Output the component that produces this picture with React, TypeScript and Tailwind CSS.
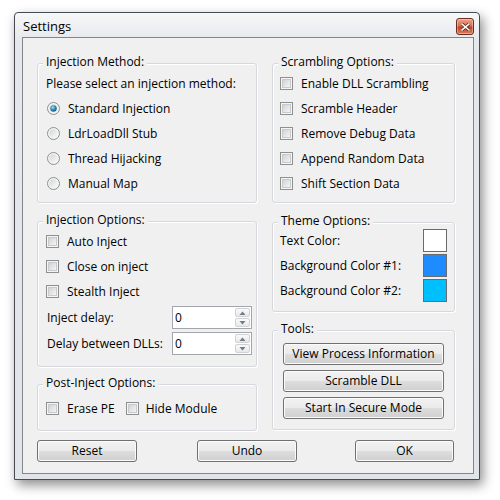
import React from "react";

const Radio = ({ checked }: { checked?: boolean }) => (
  <svg width="13" height="13" viewBox="0 0 13 13" className="shrink-0">
    <defs>
      <linearGradient id="rg" x1="0" y1="0" x2="1" y2="1">
        <stop offset="0" stopColor="#d2d4d6" />
        <stop offset="1" stopColor="#fbfbfb" />
      </linearGradient>
      <radialGradient id="rd" cx="0.4" cy="0.35" r="0.7">
        <stop offset="0" stopColor="#a9e3f5" />
        <stop offset="0.5" stopColor="#2f8fbd" />
        <stop offset="1" stopColor="#1a4f73" />
      </radialGradient>
    </defs>
    <circle cx="6.5" cy="6.5" r="6" fill="#f4f4f4" stroke="#8d8f90" />
    <circle cx="6.5" cy="6.5" r="4.2" fill="url(#rg)" />
    {checked ? <circle cx="6.5" cy="6.5" r="3.2" fill="url(#rd)" /> : null}
  </svg>
);

const Check = () => (
  <svg width="13" height="13" viewBox="0 0 13 13" className="shrink-0">
    <defs>
      <linearGradient id="cg" x1="0" y1="0" x2="1" y2="1">
        <stop offset="0" stopColor="#cdd0d3" />
        <stop offset="1" stopColor="#f7f7f7" />
      </linearGradient>
    </defs>
    <rect x="0.5" y="0.5" width="12" height="12" fill="#f5f5f5" stroke="#8e8f8f" />
    <rect x="2.5" y="2.5" width="8" height="8" fill="url(#cg)" stroke="#c8cacc" />
  </svg>
);

const Group = ({
  title,
  className,
  children,
}: {
  title: string;
  className: string;
  children?: React.ReactNode;
}) => (
  <div
    className={
      "relative rounded-[3px] border border-[#d5d9dd] shadow-[inset_1px_1px_0_#fff,1px_1px_0_#fff] " +
      className
    }
  >
    <span className="absolute left-[5px] top-[-10px] bg-[#f0f0f0] px-[3px] leading-[16px]">
      {title}
    </span>
    {children}
  </div>
);

const WinButton = ({ label, className }: { label: string; className: string }) => (
  <button
    className={
      "flex items-center justify-center rounded-[3px] border border-[#707070] bg-[linear-gradient(to_bottom,#f2f2f2_0%,#ebebeb_48%,#dddddd_52%,#cfcfcf_100%)] shadow-[inset_0_0_0_1px_#fbfbfb] leading-none " +
      className
    }
  >
    {label}
  </button>
);

const Spin = () => (
  <div className="flex h-[23px] w-[80px] items-stretch border border-[#a3a6ab] bg-white">
    <span className="flex-1 pl-[2px] leading-[21px]">0</span>
    <div className="flex w-[16px] flex-col gap-[1px] py-[1px] pr-[1px]">
      <div className="flex flex-1 items-center justify-center rounded-[2px] border border-[#cfd1d4] bg-[linear-gradient(to_bottom,#fafafa,#e8e8e8)]">
        <svg width="7" height="4" viewBox="0 0 7 4">
          <path d="M0.5 4 L3.5 0.5 L6.5 4 Z" fill="#6f7d8b" />
        </svg>
      </div>
      <div className="flex flex-1 items-center justify-center rounded-[2px] border border-[#cfd1d4] bg-[linear-gradient(to_bottom,#fafafa,#e8e8e8)]">
        <svg width="7" height="4" viewBox="0 0 7 4">
          <path d="M0.5 0 L3.5 3.5 L6.5 0 Z" fill="#6f7d8b" />
        </svg>
      </div>
    </div>
  </div>
);

const CheckRow = ({ label }: { label: string }) => (
  <div className="flex h-[25px] items-center gap-[8px]">
    <Check />
    <span>{label}</span>
  </div>
);

const RadioRow = ({ label, checked }: { label: string; checked?: boolean }) => (
  <div className="flex h-[25px] items-center gap-[8px] pl-[1px]">
    <Radio checked={checked} />
    <span>{label}</span>
  </div>
);

const ThemeRow = ({ label, color }: { label: string; color: string }) => (
  <div className="flex h-[25px] items-center justify-between">
    <span>{label}</span>
    <div className={"h-[23px] w-[24px] border border-[#6b6b6b] " + color} />
  </div>
);

export default function App() {
  return (
    <div
      className="h-[500px] w-[500px] bg-white pl-[14px] pt-[12px] text-[12px] text-black"
      style={{ fontFamily: '"Open Sans", "Noto Sans", sans-serif' }}
    >
      <div className="h-[468px] w-[466px] rounded-t-[4px] border border-[#474b50] bg-[linear-gradient(to_bottom,#f6f7f9_0px,#e4e7eb_30px,#e1e4e8_100%)] shadow-[3px_5px_12px_rgba(0,0,0,0.45)]">
        {/* title bar */}
        <div className="flex h-[24px] items-start justify-between">
          <span className="pl-[8px] pt-[4px] text-[13px] leading-[18px]">Settings</span>
          <div className="mr-[5px] mt-[5px] flex h-[17px] w-[18px] items-center justify-center rounded-[3px] border border-[#6e2a1c] bg-[linear-gradient(to_bottom,#e9a48c_0%,#d26f52_45%,#bb4325_55%,#d9805e_100%)] shadow-[inset_0_0_0_1px_rgba(255,255,255,0.35)]">
            <svg width="9" height="8" viewBox="0 0 9 8">
              <path d="M1 1 L8 7 M8 1 L1 7" stroke="#5a2014" strokeWidth="3" strokeLinecap="square" />
              <path d="M1 1 L8 7 M8 1 L1 7" stroke="#ffffff" strokeWidth="1.6" strokeLinecap="square" />
            </svg>
          </div>
        </div>

        {/* client area */}
        <div className="ml-[7px] h-[437px] w-[452px] border border-[#82868a] bg-[#f0f0f0] pl-[14px] pt-[25px]">
          <div className="flex gap-[15px]">
            {/* left column */}
            <div className="flex w-[220px] flex-col">
              <Group title="Injection Method:" className="h-[140px] pl-[8px] pt-[7px]">
                <div className="flex h-[25px] items-center">Please select an injection method:</div>
                <RadioRow label="Standard Injection" checked />
                <RadioRow label="LdrLoadDll Stub" />
                <RadioRow label="Thread Hijacking" />
                <RadioRow label="Manual Map" />
              </Group>

              <Group title="Injection Options:" className="mt-[18px] h-[146px] pl-[8px] pt-[7px]">
                <CheckRow label="Auto Inject" />
                <CheckRow label="Close on inject" />
                <CheckRow label="Stealth Inject" />
                <div className="mt-[2px] flex items-center justify-between pl-[1px] pr-[4px]">
                  <span>Inject delay:</span>
                  <Spin />
                </div>
                <div className="mt-[3px] flex items-center justify-between pl-[1px] pr-[4px]">
                  <span>Delay between DLLs:</span>
                  <Spin />
                </div>
              </Group>

              <Group title="Post-Inject Options:" className="mt-[17px] h-[47px] pl-[8px] pt-[11px]">
                <div className="flex h-[25px] items-center">
                  <Check />
                  <span className="ml-[8px]">Erase PE</span>
                  <span className="ml-[11px]">
                    <Check />
                  </span>
                  <span className="ml-[7px]">Hide Module</span>
                </div>
              </Group>
            </div>

            {/* right column */}
            <div className="flex w-[183px] flex-col">
              <Group title="Scrambling Options:" className="h-[140px] pl-[7px] pt-[7px]">
                <CheckRow label="Enable DLL Scrambling" />
                <CheckRow label="Scramble Header" />
                <CheckRow label="Remove Debug Data" />
                <CheckRow label="Append Random Data" />
                <CheckRow label="Shift Section Data" />
              </Group>

              <Group title="Theme Options:" className="mt-[19px] h-[90px] pl-[7px] pr-[7px] pt-[5px]">
                <ThemeRow label="Text Color:" color="bg-white" />
                <ThemeRow label="Background Color #1:" color="bg-[#1e8cff]" />
                <ThemeRow label="Background Color #2:" color="bg-[#00bfff]" />
              </Group>

              <Group title="Tools:" className="mt-[18px] flex h-[100px] flex-col items-center gap-[5px] pt-[12px]">
                <WinButton label="View Process Information" className="h-[22px] w-[161px]" />
                <WinButton label="Scramble DLL" className="h-[22px] w-[161px]" />
                <WinButton label="Start In Secure Mode" className="h-[22px] w-[161px]" />
              </Group>
            </div>
          </div>

          {/* dialog buttons */}
          <div className="mt-[9px] flex">
            <WinButton label="Reset" className="h-[22px] w-[100px]" />
            <WinButton label="Undo" className="ml-[60px] h-[22px] w-[100px]" />
            <WinButton label="OK" className="ml-[58px] h-[22px] w-[99px]" />
          </div>
        </div>
      </div>
    </div>
  );
}
